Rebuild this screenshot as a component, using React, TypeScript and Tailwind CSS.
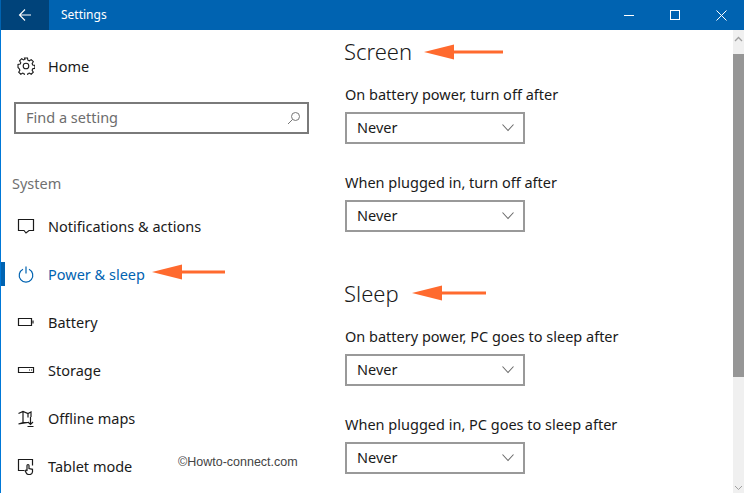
import type { ReactNode } from 'react';

const font = "font-['Noto_Sans','Open_Sans',sans-serif]";

function Arrow({ className, width }: { className: string; width: number }) {
  return (
    <svg className={`absolute ${className}`} width={width} height={16} viewBox={`0 0 ${width} 16`}>
      <path d={`M0 8 L30 0.5 V6.5 H${width} V9.5 H30 V15.5 Z`} fill="#ff6a2e" />
    </svg>
  );
}

const icons: Record<string, ReactNode> = {
  notifications: (
    <path d="M1.5 2.5h15v11h-4.5l-3 2.5-2-2.5h-5.500z" />
  ),
  power: (
    <>
      <path d="M6 4.200a6.800 6.800 0 1 0 6 0" />
      <path d="M9 1.500v7" />
    </>
  ),
  battery: (
    <>
      <path d="M1.500 5.500h13v7h-13z" />
      <path d="M16 7.500v3" />
    </>
  ),
  storage: (
    <>
      <path d="M1.500 6.500h15v5h-15z" />
      <path d="M12 9h1M14 9h1" />
    </>
  ),
  maps: (
    <>
      <path d="M1.500 4.500l4.500-2 5 2 3-1.500v5M11 4.500v4M6 2.500v11M11 13.500l-5 0-4.500 1.500z" />
      <path d="M13.500 8v7.500M11 13l2.500 2.500 2.500-2.500M10.500 17.500h6" />
    </>
  ),
  tablet: (
    <>
      <path d="M7 13.500h-5.500v-11h14v6" />
      <path d="M10 14V8.500a1 1 0 0 1 2 0v3l3.500 .8v2.700a3 3 0 0 1-3 2.500h-.5a3 3 0 0 1-3-2l-1-2 1.500-.5z" />
    </>
  ),
};

function NavRow({ label, icon, active }: { label: string; icon: string; active?: boolean }) {
  return (
    <div className={`relative flex h-12 items-center pl-[16px] ${active ? 'text-[#0063b1]' : 'text-[#1a1a1a]'}`}>
      {active && <div className="absolute left-0 top-[12px] h-6 w-1 bg-[#0063b1]" />}
      <svg width="18" height="18" viewBox="0 0 18 18" fill="none" stroke="currentColor" strokeWidth="1.200" className="shrink-0">
        {icons[icon]}
      </svg>
      <span className="ml-[13px] text-[14.5px] leading-5">{label}</span>
    </div>
  );
}

function Chooser({ label, mt }: { label: string; mt: string }) {
  return (
    <div className={mt}>
      <div className="h-5 pl-px text-[14.5px] leading-5 text-[#1a1a1a]">{label}</div>
      <div className="ml-px mt-2 flex h-8 w-[180px] items-center justify-between border-2 border-[#999999] pl-[10px] pr-[8px] text-[14.5px] text-[#1a1a1a]">
        <span>Never</span>
        <svg width="14" height="10" viewBox="0 0 14 10" fill="none" stroke="#6b6b6b" strokeWidth="1.100">
          <path d="M1.500 1.500L7 7.500l5.500-6" />
        </svg>
      </div>
    </div>
  );
}

export default function App() {
  return (
    <div className={`relative flex h-[493px] w-[744px] flex-col overflow-hidden bg-white ${font}`}>
      {/* title bar */}
      <div className="flex h-[30px] shrink-0 items-center bg-[#0063b1] pl-px text-white">
        <div className="flex h-full w-12 items-center justify-center bg-[#00437a]">
          <svg width="14" height="14" viewBox="0 0 14 14" fill="none" stroke="white" strokeWidth="1.100">
            <path d="M13 7H1.500M7 1.500L1.500 7 7 12.500" />
          </svg>
        </div>
        <span className="ml-3 text-[12px]">Settings</span>
        <div className="ml-auto flex h-full items-center">
          <div className="flex w-[46px] justify-center">
            <div className="h-px w-[10px] bg-white" />
          </div>
          <div className="flex w-[46px] justify-center">
            <div className="h-[10px] w-[10px] border border-white" />
          </div>
          <div className="flex w-[46px] justify-center">
            <svg width="11" height="11" viewBox="0 0 11 11" stroke="white" strokeWidth="1">
              <path d="M.5 .5l10 10M10.500 .5l-10 10" />
            </svg>
          </div>
        </div>
      </div>

      <div className="flex min-h-0 flex-1 border-l border-[#0078d7]">
        {/* sidebar */}
        <div className="w-[329px] shrink-0">
          <div className="flex h-[72px] items-center pl-[16px] text-[#1a1a1a]">
            <svg width="18" height="18" viewBox="0 0 18 18" fill="none" stroke="currentColor" strokeWidth="1.100" className="shrink-0">
              <circle cx="9" cy="9" r="2.800" />
              <path d="M7.500 1h3l.4 2.200 1.400.6 1.900-1.200 2.100 2.100-1.200 1.900.6 1.400 2.200.4v3l-2.200.4-.6 1.400 1.200 1.900-2.100 2.100-1.900-1.200-1.400.6-.4 2.200h-3l-.4-2.200-1.400-.6-1.900 1.200-2.100-2.100 1.200-1.900-.6-1.400L1 10.500v-3l2.200-.4.6-1.400-1.200-1.900 2.100-2.100 1.900 1.200 1.400-.6z" />
            </svg>
            <span className="ml-[13px] text-[14.5px] leading-5">Home</span>
          </div>
          <div className="ml-[13px] flex h-8 w-[295px] items-center justify-between border-2 border-[#7a7a7a] pl-[10px] pr-[6px] text-[14.5px] text-[#6d6d6d]">
            <span>Find a setting</span>
            <svg width="14" height="14" viewBox="0 0 14 14" fill="none" stroke="#777777" strokeWidth="1">
              <circle cx="8.500" cy="5.500" r="4" />
              <path d="M5.500 8.500L1 13" />
            </svg>
          </div>
          <div className="ml-[11px] mt-[39px] h-5 text-[14.5px] leading-5 text-[#707070]">System</div>
          <div className="mt-[9px]">
            <NavRow label="Notifications & actions" icon="notifications" />
            <NavRow label="Power & sleep" icon="power" active />
            <NavRow label="Battery" icon="battery" />
            <NavRow label="Storage" icon="storage" />
            <NavRow label="Offline maps" icon="maps" />
            <NavRow label="Tablet mode" icon="tablet" />
          </div>
        </div>

        {/* content */}
        <div className="min-w-0 flex-1 pl-[14px]">
          <div className="mt-[5px] h-8 text-[22px] font-light leading-8 text-[#1a1a1a]">Screen</div>
          <Chooser label="On battery power, turn off after" mt="mt-[17px]" />
          <Chooser label="When plugged in, turn off after" mt="mt-[28px]" />
          <div className="mt-[45px] h-8 text-[22px] font-light leading-8 text-[#1a1a1a]">Sleep</div>
          <Chooser label="On battery power, PC goes to sleep after" mt="mt-[17px]" />
          <Chooser label="When plugged in, PC goes to sleep after" mt="mt-[28px]" />
        </div>

        {/* scrollbar */}
        <div className="flex w-[11px] shrink-0 flex-col bg-[#f0f0f0]">
          <div className="flex h-6 justify-center pt-[6px]">
            <svg width="9" height="6" viewBox="0 0 9 6" fill="none" stroke="#a0a0a0" strokeWidth="1.300">
              <path d="M1 5l3.500-3.500L8 5" />
            </svg>
          </div>
          <div className="h-[323px] bg-[#969696]" />
          <div className="flex flex-1 items-end justify-center pb-[2px]">
            <svg width="9" height="6" viewBox="0 0 9 6" fill="none" stroke="#a0a0a0" strokeWidth="1">
              <path d="M1 1l3.500 3.500L8 1" />
            </svg>
          </div>
        </div>
      </div>

      {/* annotations drawn on top of the screenshot */}
      <Arrow className="left-[424px] top-[44px]" width={79} />
      <Arrow className="left-[152px] top-[264px]" width={73} />
      <Arrow className="left-[412px] top-[285px]" width={74} />
      <span className="absolute left-[178px] top-[454px] font-['Liberation_Sans',sans-serif] text-[12.5px] leading-4 text-[#444444]">
        ©Howto-connect.com
      </span>
    </div>
  );
}
